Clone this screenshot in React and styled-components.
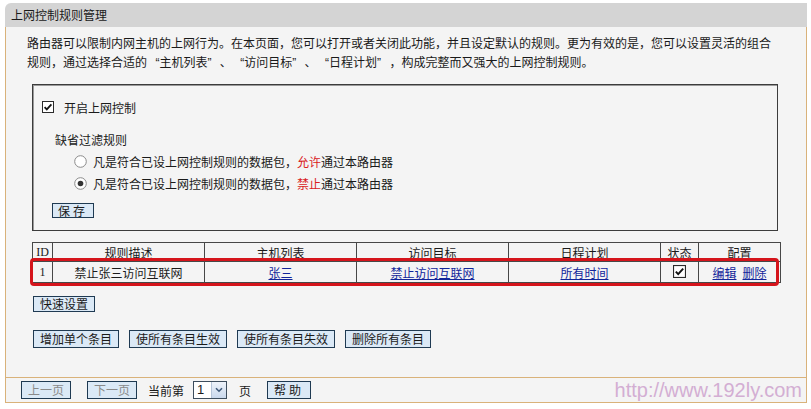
import React from 'react';
import styled, { createGlobalStyle } from 'styled-components';

const GlobalStyle = createGlobalStyle`
  body {
    margin: 0;
    background: #fff;
    font-family: "Noto Sans CJK SC", "Liberation Sans", sans-serif;
    font-size: 12px;
    color: #1a1a1a;
  }
`;

const Panel = styled.div`
  width: 802px;
  margin: 3px 0 0 5px;
`;

const Title = styled.div`
  height: 24px;
  line-height: 24px;
  padding-left: 6px;
  background: #d4d4d4;
  border-top-left-radius: 6px;
  font-size: 12px;
`;

const Body = styled.div`
  background: #f4f4f4;
  border-left: 1px solid #d9b27a;
  border-right: 1px solid #d9b27a;
  padding: 8px 0 29px 26px;
`;

// Latin face first so the quote marks and padding spaces take Arial widths
const Intro = styled.p`
  margin: 0 0 0 -5px;
  line-height: 19px;
  width: 750px;
  font-family: "Liberation Sans", "Noto Sans CJK SC", sans-serif;
`;

const Box = styled.div`
  margin-top: 11px;
  width: 746px;
  height: 147px;
  border: 1px solid #3c3c3c;
  box-shadow: inset 1px 1px 0 #9a9a9a;
  padding: 12px 0 0 9px;
  box-sizing: border-box;
`;

const Row = styled.div`
  display: flex;
  align-items: center;
  gap: ${p => p.$gap || 8}px;
  height: ${p => p.$h || 20}px;
  margin-top: ${p => p.$mt || 0}px;
  padding-left: ${p => p.$indent || 0}px;
`;

const Red = styled.span`
  color: #d9201c;
`;

const Button = styled.button`
  font-family: inherit;
  font-size: 12px;
  height: ${p => p.$h || 18}px;
  line-height: ${p => (p.$h || 18) - 2}px;
  padding: 0 ${p => p.$px || 6}px;
  margin: 0;
  background: #dbe9f6;
  border: 1px solid #1f3a52;
  border-radius: 0;
  color: ${p => (p.disabled ? '#8a8a8a' : '#1a1a1a')};
  letter-spacing: ${p => p.$ls || 0}px;
  cursor: pointer;
`;

const TableWrap = styled.div`
  position: relative;
  margin-top: 11px;
  width: 748px;
`;

const Table = styled.table`
  border-collapse: collapse;
  width: 748px;
  table-layout: fixed;
  th, td {
    border: 1px solid #474747;
    text-align: center;
    font-weight: normal;
    padding: 0;
    font-size: 12px;
  }
  th { height: 18px; line-height: 17px; }
  td { height: 20px; line-height: 19px; }
`;

const IdCell = styled.td`
  font-family: "Liberation Serif", serif;
`;

const IdHead = styled.th`
  font-family: "Liberation Serif", serif;
`;

const Link = styled.a`
  color: #12259a;
  text-decoration: underline;
  margin: 0 ${p => p.$mx || 0}px;
`;

const Highlight = styled.div`
  position: absolute;
  left: -2px;
  top: 16px;
  width: 749px;
  height: 28px;
  border: 3px solid #d5141b;
  border-radius: 4px;
  box-sizing: border-box;
  pointer-events: none;
`;

const Actions = styled.div`
  display: flex;
  gap: 10px;
  margin-top: ${p => p.$mt}px;
  margin-left: 1px;
`;

const Footer = styled.div`
  display: flex;
  align-items: center;
  height: 24px;
  background: #f4f4f4;
  border: 1px solid #d9b27a;
  padding-left: 15px;
`;

const Gap = styled.span`
  display: inline-block;
  width: ${p => p.$w}px;
  flex: none;
`;

const Select = styled.div`
  display: flex;
  height: 18px;
  width: 34px;
  box-sizing: border-box;
  border: 1px solid #3d4d5c;
  background: #fff;
  font-family: "Liberation Sans", sans-serif;
  font-size: 13px;
  span {
    flex: 1;
    padding-left: 3px;
    line-height: 16px;
  }
`;

const SelectArrow = styled.div`
  width: 14px;
  display: flex;
  align-items: center;
  justify-content: center;
  background: linear-gradient(#eef3fa, #c9d8ec);
  border-left: 1px solid #b5c4d8;
`;

const Watermark = styled.span`
  margin-left: auto;
  padding-right: 4px;
  font-family: "Liberation Sans", Arial, sans-serif;
  font-size: 20px;
  color: #d3aed3;
  line-height: 24px;
`;

function Check({ size = 12 }) {
  return (
    <svg width={size} height={size} viewBox="0 0 12 12" style={{ flex: 'none' }}>
      <rect x="0.5" y="0.5" width="11" height="11" fill="#fff" stroke="#2b2b2b" />
      <path d="M2.6 6.1 L4.8 8.4 L9.4 3.4" fill="none" stroke="#111" strokeWidth="1.8" />
    </svg>
  );
}

function Radio({ checked }) {
  return (
    <svg width="13" height="13" viewBox="0 0 13 13" style={{ flex: 'none' }}>
      <circle cx="6.5" cy="6.5" r="5.8" fill="#fff" stroke="#8a8a8a" />
      {checked && <circle cx="6.5" cy="6.5" r="2.8" fill="#333" />}
    </svg>
  );
}

function Chevron() {
  return (
    <svg width="8" height="6" viewBox="0 0 8 6">
      <path d="M1 1.2 L4 4.2 L7 1.2" fill="none" stroke="#3f5a7a" strokeWidth="1.6" />
    </svg>
  );
}

// quote marks are full-width in the router's font: pad each one to an em
const pad = '\u2002\u2009';
const q = s => `${pad}“${s}”${pad}`;

const intro =
  '路由器可以限制内网主机的上网行为。在本页面，您可以打开或者关闭此功能，并且设定默认的规则。更为有效的是，您可以设置灵活的组合规则，通过选择合适的' +
  q('主机列表') + '、' + q('访问目标') + '、' + q('日程计划') +
  '，构成完整而又强大的上网控制规则。';

const rules = [
  { id: 1, desc: '禁止张三访问互联网', host: '张三', target: '禁止访问互联网', schedule: '所有时间' },
];

export default function App() {
  return (
    <>
      <GlobalStyle />
      <Panel>
        <Title>上网控制规则管理</Title>
        <Body>
          <Intro>{intro}</Intro>

          <Box>
            <Row $gap={10}>
              <Check />
              <span>开启上网控制</span>
            </Row>
            <Row $mt={12} $indent={13}>缺省过滤规则</Row>
            <Row $h={22} $mt={1} $indent={32} $gap={6}>
              <Radio />
              <span>凡是符合已设上网控制规则的数据包，<Red>允许</Red>通过本路由器</span>
            </Row>
            <Row $h={22} $indent={32} $gap={6}>
              <Radio checked />
              <span>凡是符合已设上网控制规则的数据包，<Red>禁止</Red>通过本路由器</span>
            </Row>
            <Row $mt={9} $indent={10} $h={15}>
              <Button $h={15} $px={5} $ls={3}>保存</Button>
            </Row>
          </Box>

          <TableWrap>
            <Table>
              <colgroup>
                <col style={{ width: 20 }} />
                <col style={{ width: 152 }} />
                <col style={{ width: 152 }} />
                <col style={{ width: 152 }} />
                <col style={{ width: 152 }} />
                <col style={{ width: 38 }} />
                <col style={{ width: 82 }} />
              </colgroup>
              <thead>
                <tr>
                  <IdHead>ID</IdHead>
                  <th>规则描述</th>
                  <th>主机列表</th>
                  <th>访问目标</th>
                  <th>日程计划</th>
                  <th>状态</th>
                  <th>配置</th>
                </tr>
              </thead>
              <tbody>
                {rules.map(r => (
                  <tr key={r.id}>
                    <IdCell>{r.id}</IdCell>
                    <td>{r.desc}</td>
                    <td><Link href="#">{r.host}</Link></td>
                    <td><Link href="#">{r.target}</Link></td>
                    <td><Link href="#">{r.schedule}</Link></td>
                    <td><Check size={13} /></td>
                    <td>
                      <Link href="#" $mx={3}>编辑</Link>
                      <Link href="#" $mx={3}>删除</Link>
                    </td>
                  </tr>
                ))}
              </tbody>
            </Table>
            <Highlight />
          </TableWrap>

          <Actions $mt={13}>
            <Button $h={16} $px={6}>快速设置</Button>
          </Actions>
          <Actions $mt={18}>
            <Button $px={6}>增加单个条目</Button>
            <Button $px={6}>使所有条目生效</Button>
            <Button $px={6}>使所有条目失效</Button>
            <Button $px={6}>删除所有条目</Button>
          </Actions>
        </Body>
        <Footer>
          <Button disabled $px={6}>上一页</Button>
          <Gap $w={16} />
          <Button disabled $px={6}>下一页</Button>
          <Gap $w={11} />
          <span>当前第</span>
          <Gap $w={9} />
          <Select>
            <span>1</span>
            <SelectArrow><Chevron /></SelectArrow>
          </Select>
          <Gap $w={12} />
          <span>页</span>
          <Gap $w={16} />
          <Button $px={6} $ls={3}>帮助</Button>
          <Watermark>http://www.192ly.com</Watermark>
        </Footer>
      </Panel>
    </>
  );
}
